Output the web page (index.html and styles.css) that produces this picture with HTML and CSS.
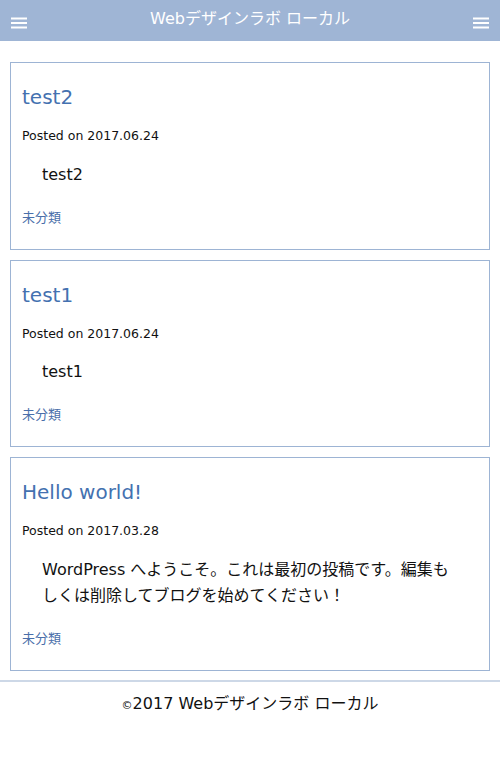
FILE: index.html
```html
<!DOCTYPE html>
<html lang="ja">
<head>
<meta charset="utf-8">
<title>Webデザインラボ ローカル</title>
<link rel="stylesheet" href="styles.css">
</head>
<body>
<header class="site-header">
  <button class="menu-btn" aria-label="menu">
    <svg width="16" height="12" viewBox="0 0 16 12"><rect x="0" y="0.5" width="16" height="2" fill="#fff"/><rect x="0" y="5" width="16" height="2" fill="#fff"/><rect x="0" y="9.5" width="16" height="2" fill="#fff"/></svg>
  </button>
  <h1 class="site-title">Webデザインラボ ローカル</h1>
  <button class="menu-btn" aria-label="menu">
    <svg width="16" height="12" viewBox="0 0 16 12"><rect x="0" y="0.5" width="16" height="2" fill="#fff"/><rect x="0" y="5" width="16" height="2" fill="#fff"/><rect x="0" y="9.5" width="16" height="2" fill="#fff"/></svg>
  </button>
</header>
<main class="posts">
  <article class="post">
    <h2 class="post-title">test2</h2>
    <p class="post-meta">Posted on 2017.06.24</p>
    <div class="post-content"><p>test2</p></div>
    <p class="post-cat">未分類</p>
  </article>
  <article class="post">
    <h2 class="post-title">test1</h2>
    <p class="post-meta">Posted on 2017.06.24</p>
    <div class="post-content"><p>test1</p></div>
    <p class="post-cat">未分類</p>
  </article>
  <article class="post">
    <h2 class="post-title">Hello world!</h2>
    <p class="post-meta">Posted on 2017.03.28</p>
    <div class="post-content"><p>WordPress へようこそ。これは最初の投稿です。編集もしくは削除してブログを始めてください！</p></div>
    <p class="post-cat">未分類</p>
  </article>
</main>
<footer class="site-footer">
  <p><span class="copy">©</span>2017 Webデザインラボ ローカル</p>
</footer>
</body>
</html>
```
FILE: styles.css
```css
* { box-sizing: border-box; }
body {
  margin: 0;
  font-family: "DejaVu Sans", "Noto Sans CJK JP", sans-serif;
  color: #111;
  background: #fff;
}
.site-header {
  height: 41px;
  background: #9fb5d5;
  display: flex;
  align-items: center;
  justify-content: space-between;
  padding: 0 11px;
}
.menu-btn {
  border: 0;
  background: none;
  padding: 0;
  width: 16px;
  height: 12px;
  display: flex;
  margin-top: 5px;
}
.site-title {
  margin: 0;
  color: #fff;
  font-size: 16px;
  font-weight: normal;
  line-height: 20px;
  margin-top: -3px;
}
.posts {
  padding: 21px 10px 0;
  display: flex;
  flex-direction: column;
  gap: 10px;
}
.post {
  border: 1px solid #9db4d4;
  padding: 19px 11px 21px;
}
.post-title {
  margin: 0;
  font-size: 20px;
  line-height: 30px;
  font-weight: normal;
  color: #4471b0;
}
.post-meta {
  margin: 14px 0 0;
  font-size: 12.5px;
  line-height: 20px;
}
.post-content {
  margin: 15.5px 14px 0 20px;
  font-size: 16px;
  line-height: 26px;
}
.post-content p { margin: 0; }
.post-cat {
  margin: 20px 0 0;
  font-size: 13px;
  line-height: 20px;
  color: #4a6faa;
}
.site-footer {
  margin-top: 9.5px;
  border-top: 2px solid #cdd8e7;
  text-align: center;
}
.site-footer p {
  margin: 12px 0 0;
  font-size: 16px;
  line-height: 20px;
}
.copy { font-size: 11px; }
```
